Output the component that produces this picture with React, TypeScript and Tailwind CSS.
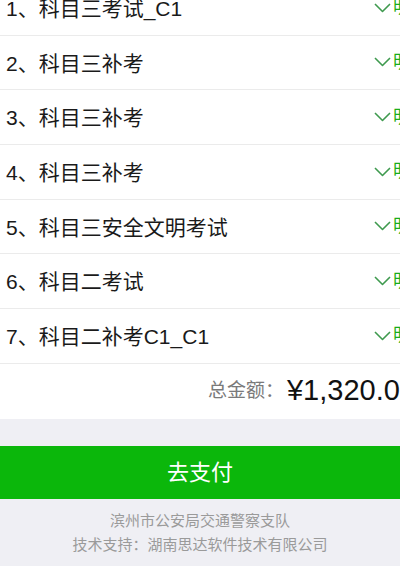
import React from 'react';

interface FeeItem {
  id: number;
  name: string;
}

const items: FeeItem[] = [
  { id: 1, name: '科目三考试_C1' },
  { id: 2, name: '科目三补考' },
  { id: 3, name: '科目三补考' },
  { id: 4, name: '科目三补考' },
  { id: 5, name: '科目三安全文明考试' },
  { id: 6, name: '科目二考试' },
  { id: 7, name: '科目二补考C1_C1' },
];

const font = { fontFamily: '"Liberation Sans", "Noto Sans CJK SC", sans-serif' };

function Chevron() {
  return (
    <svg width="17" height="10" viewBox="0 0 17 10" fill="none" className="shrink-0">
      <polyline points="1,1 8.5,8.5 16,1" stroke="#3f9a4f" strokeWidth="1.6" strokeLinejoin="round" />
    </svg>
  );
}

export default function App() {
  return (
    <div className="w-[400px] h-[566px] overflow-hidden bg-[#efeff4]" style={font}>
      <div className="w-[430px] -mt-[19px] bg-white">
        {items.map(item => (
          <div
            key={item.id}
            className="h-[54.67px] flex items-center justify-between border-b border-[#ebebeb] pl-[6px]"
          >
            <span className="text-[21px] text-[#1a1a1a] pt-[2px]">
              {item.id}、{item.name}
            </span>
            <span className="flex items-center gap-[2px] w-[56px] shrink-0 text-[18px] text-[#1aad19]">
              <Chevron />
              明细
            </span>
          </div>
        ))}
        <div className="h-[55px] flex items-center justify-end pr-[14px]">
          <span className="text-[19px] text-[#7a7a7a] mr-[3px]">总金额：</span>
          <span className="text-[29px] text-[#111]">¥1,320.00</span>
        </div>
      </div>

      <div className="h-[27px]" />

      <button className="w-full h-[53px] bg-[#0bb70b] text-white text-[22px] flex items-center justify-center">
        去支付
      </button>

      <div className="pt-[10px] flex flex-col items-center text-[15px] leading-[24px] text-[#9a9a9a]">
        <p>滨州市公安局交通警察支队</p>
        <p>技术支持：湖南思达软件技术有限公司</p>
      </div>
    </div>
  );
}
